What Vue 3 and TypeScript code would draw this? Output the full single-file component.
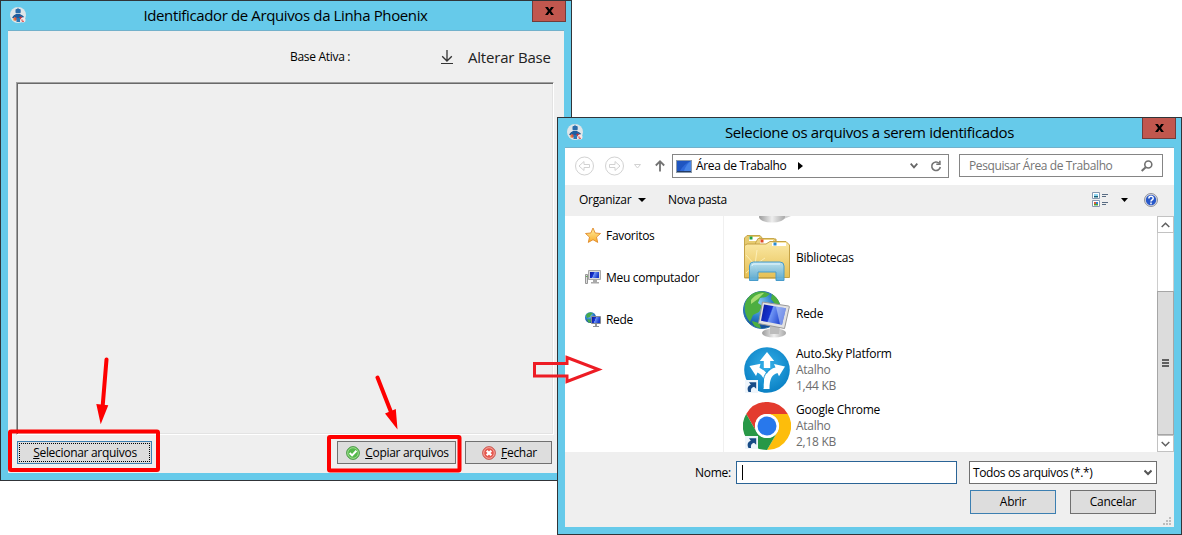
<script setup lang="ts">
import { ref } from 'vue';

interface Entry {
  name: string;
  icon: string;
  kind?: string;
  size?: string;
}

const places: Entry[] = [
  { name: 'Favoritos', icon: 'star' },
  { name: 'Meu computador', icon: 'pc' },
  { name: 'Rede', icon: 'net' },
];

const files: Entry[] = [
  { name: '', icon: 'disk' },
  { name: 'Bibliotecas', icon: 'library' },
  { name: 'Rede', icon: 'network' },
  { name: 'Auto.Sky Platform', icon: 'sky', kind: 'Atalho', size: '1,44 KB' },
  { name: 'Google Chrome', icon: 'chrome', kind: 'Atalho', size: '2,18 KB' },
];

const fileName = ref('');
</script>

<template>
  <div class="desktop">
    <svg class="defs" width="0" height="0">
      <defs>
        <linearGradient id="screen" x1="0" y1="0" x2="1" y2="0.3">
          <stop offset="0" stop-color="#0a1a9c" />
          <stop offset="0.45" stop-color="#1733d0" />
          <stop offset="0.5" stop-color="#6f95f4" />
          <stop offset="1" stop-color="#1a3ccc" />
        </linearGradient>
        <radialGradient id="globe" cx="0.4" cy="0.3" r="0.7">
          <stop offset="0" stop-color="#8fd0f5" />
          <stop offset="0.55" stop-color="#2b7fca" />
          <stop offset="1" stop-color="#114a94" />
        </radialGradient>
        <linearGradient id="metal" x1="0" y1="0" x2="1" y2="0">
          <stop offset="0" stop-color="#9b9b9b" />
          <stop offset="0.5" stop-color="#eeeeee" />
          <stop offset="1" stop-color="#a8a8a8" />
        </linearGradient>
        <linearGradient id="folder" x1="0" y1="0" x2="0" y2="1">
          <stop offset="0" stop-color="#fbe9a6" />
          <stop offset="1" stop-color="#e6c054" />
        </linearGradient>
        <linearGradient id="stand" x1="0" y1="0" x2="0" y2="1">
          <stop offset="0" stop-color="#b9e2f5" />
          <stop offset="1" stop-color="#4ea6d8" />
        </linearGradient>
        <radialGradient id="skyfill" cx="0.5" cy="0.4" r="0.6">
          <stop offset="0" stop-color="#35b0e8" />
          <stop offset="1" stop-color="#0a80c4" />
        </radialGradient>
        <linearGradient id="gold" x1="0" y1="0" x2="0" y2="1">
          <stop offset="0" stop-color="#fff0a0" />
          <stop offset="1" stop-color="#f9ac2a" />
        </linearGradient>
        <symbol id="robot" viewBox="0 0 16 16">
          <circle cx="8" cy="8" r="8" fill="#dfe5e8" />
          <path d="M8 .8v2" stroke="#2467a5" />
          <rect x="5.500" y="2" width="5.200" height="4.200" rx="1" fill="#2a6cab" />
          <path d="M5.500 7h5l1.500 5H4z" fill="#1d5c9e" />
          <path d="M5 8.300 2.700 11M11 8.300l2.500 2" stroke="#1b5793" stroke-width="1.600" />
          <circle cx="5.300" cy="12" r="1.800" fill="#e05643" />
          <circle cx="10.700" cy="11" r="1.600" fill="#bd3440" />
          <path d="M6.500 11h3.500v4H6.500z" fill="#2977b5" />
          <circle cx="13" cy="13" r="2.500" fill="#f7e8e8" />
          <path d="M12 12.300v2h2" fill="none" stroke="#d54a49" />
          <path d="M4 11.500v2" stroke="#f3ae29" />
        </symbol>
        <symbol id="shortcut" viewBox="0 0 13 13">
          <rect width="13" height="13" fill="#eef5fb" />
          <path d="M3.500 12C1.700 8.300 3 5.500 5.800 4.700L4 2.200h7.200v6.600L9 6.800C6.500 7.600 5.500 9 6 12z" fill="#174b86" />
        </symbol>
      </defs>
    </svg>

    <section class="window main-window">
      <header class="titlebar">
        <svg class="app-icon" width="16" height="16"><use href="#robot" /></svg>
        <h1 class="main-title">Identificador de Arquivos da Linha Phoenix</h1>
        <button class="close">
          <svg width="9" height="8" viewBox="0 0 10 9"><path d="M0 0h3.200L5 2.700 6.800 0H10L6.700 4.400 10 9H6.800L5 6.200 3.200 9H0l3.300-4.600z" /></svg>
        </button>
      </header>
      <div class="client">
        <div class="base-row">
          <span class="base-label">Base Ativa :</span>
          <svg class="download" width="12" height="15" viewBox="0 0 12 15" fill="none" stroke="#333">
            <path d="M6 0v11M1.200 6.200 6 11l4.800-4.800" stroke-width="1.300" />
            <path d="M0 13.500h12" />
          </svg>
          <span class="change-base">Alterar Base</span>
        </div>
        <div class="panel"></div>
        <div class="actions">
          <button class="button select"><span class="focus"><span><u>S</u>elecionar arquivos</span></span></button>
          <button class="button copy">
            <svg width="14" height="14" viewBox="0 0 14 14">
              <circle cx="7" cy="7" r="6.400" fill="#54b84a" stroke="#4f9a4c" />
              <circle cx="7" cy="7" r="5.300" fill="none" stroke="#a1dc91" />
              <path d="m3.700 7 2.400 2.400 4.300-4.600" fill="none" stroke="#fff" stroke-width="2" />
            </svg>
            <span><u>C</u>opiar arquivos</span>
          </button>
          <button class="button quit">
            <svg width="14" height="14" viewBox="0 0 14 14">
              <circle cx="7" cy="7" r="6.400" fill="#e5574e" stroke="#c9605a" />
              <circle cx="7" cy="7" r="5.300" fill="none" stroke="#f4aaa0" />
              <path d="m4.700 4.700 4.600 4.600m0-4.600L4.700 9.300" stroke="#fff" stroke-width="2.200" />
            </svg>
            <span><u>F</u>echar</span>
          </button>
        </div>
      </div>
    </section>

    <section class="window dialog">
      <header class="titlebar">
        <svg class="app-icon" width="16" height="16"><use href="#robot" /></svg>
        <h1 class="dialog-title">Selecione os arquivos a serem identificados</h1>
        <button class="close">
          <svg width="9" height="8" viewBox="0 0 10 9"><path d="M0 0h3.200L5 2.700 6.800 0H10L6.700 4.400 10 9H6.800L5 6.200 3.200 9H0l3.300-4.600z" /></svg>
        </button>
      </header>
      <div class="client">
        <nav class="navbar">
          <svg width="101" height="20" viewBox="0 0 101 20" fill="none">
            <g stroke="#d2d2d2">
              <circle cx="10.500" cy="10" r="9" />
              <circle cx="40.500" cy="10" r="9" />
              <path d="m5 10 5-4.500v3h5.500v3H10v3zM46 10l-5-4.500v3h-5.500v3H41v3z" />
              <path d="M60.500 8.500h6l-3 3.500z" />
            </g>
            <path d="M86 15.500V5.500M81.800 9.500 86 5.300l4.200 4.200" stroke="#737373" stroke-width="1.800" />
          </svg>
          <div class="address">
            <svg width="16" height="13" viewBox="0 0 16 13">
              <rect x=".5" y=".5" width="15" height="12" fill="#2f69d9" stroke="#8b9aac" />
              <path d="M1 11V1h14C10 3 6 7 4 11z" fill="#1f55c0" />
              <path d="M15 1v10H8c1-4 4-8 7-10z" fill="#4684e6" />
              <path d="M1 11.500h14" stroke="#263c63" />
            </svg>
            <span class="address-text">Área de Trabalho</span>
            <svg class="crumb" width="5" height="8"><path d="M0 0v8l5-4z" /></svg>
            <svg class="chevron" width="8" height="6" fill="none" stroke="#666" stroke-width="1.800"><path d="m.7.700 3.300 3.600L7.300.700" /></svg>
            <svg width="12" height="12" viewBox="0 0 12 12" fill="none" stroke="#747474" stroke-width="1.600">
              <path d="M9.200 3.300A4.300 4.300 0 1 0 10.300 7" />
              <path d="M9.900.800v3.400H6.300" />
            </svg>
          </div>
          <div class="search">
            <span>Pesquisar Área de Trabalho</span>
            <svg width="12" height="12" viewBox="0 0 12 12" fill="none" stroke="#707070">
              <circle cx="7.300" cy="4.500" r="3.500" stroke-width="1.600" />
              <path d="M4.700 7.200.700 11" stroke-width="2" />
            </svg>
          </div>
        </nav>
        <div class="commands">
          <span class="organize">Organizar</span>
          <svg width="8" height="4"><path d="M0 0h8L4 4z" /></svg>
          <span class="new-folder">Nova pasta</span>
          <svg class="views" width="16" height="16" viewBox="0 0 16 16">
            <path d="M.500.500h7v6h-7zM.500 8.500h7v6h-7z" fill="#fff" stroke="#8799b1" />
            <path d="M2 2h4v2H2z" fill="#91d5f2" />
            <path d="M2 4h4v1.500H2z" fill="#165f73" />
            <path d="M2 10h2v2H2z" fill="#dd5a3a" />
            <path d="M4 10h2v2H4z" fill="#347fcb" />
            <path d="M2 12h4v1.500H2z" fill="#4f9f34" />
            <path d="M10 2.500h6M10 4.500h4M10 10.500h6M10 12.500h4" stroke="#596c83" />
          </svg>
          <svg class="views-arrow" width="7" height="4"><path d="M0 0h7L3.500 4z" /></svg>
          <svg class="help" width="14" height="14" viewBox="0 0 14 14">
            <circle cx="7" cy="7" r="6.500" fill="#d9d9df" stroke="#8f929d" />
            <circle cx="7" cy="7" r="5.200" fill="#2858c9" />
            <path d="M4.900 5.400c0-2.800 4.300-2.700 4.300-.2C9.200 6.900 7 6.700 7 8.500M7 9.600v1.600" fill="none" stroke="#fff" stroke-width="1.500" />
          </svg>
        </div>
        <div class="browser">
          <ul class="places">
            <li v-for="place in places" :key="place.name">
              <svg v-if="place.icon === 'star'" width="16" height="16" viewBox="0 0 16 16">
                <path d="m8 0 2.200 5 5.300.500-4 3.600 1.200 5.300L8 11.700l-4.700 2.700 1.200-5.300-4-3.600L5.800 5z" fill="url(#gold)" stroke="#e08a2a" stroke-width=".9" />
              </svg>
              <svg v-else-if="place.icon === 'pc'" width="16" height="16" viewBox="0 0 16 16">
                <path d="M.500 4.500h2v9h-2z" fill="#ddd" stroke="#969696" />
                <path d="M1 6.500h1.500" stroke="#5fac50" />
                <path d="M3.500.500h12v9h-12z" fill="#ddd" stroke="#a9a9a9" />
                <path d="M5 2h9v6H5z" fill="url(#screen)" />
                <path d="M8 10h4v2h2v1.500H6V12h2z" fill="#aaa" />
              </svg>
              <svg v-else width="16" height="16" viewBox="0 0 16 16">
                <circle cx="5.500" cy="5.500" r="5.500" fill="url(#globe)" />
                <path d="M1 3C3 0 6 0 8 1L6 3 5 5 2 6zM2 7l4 1-1 3-2-1z" fill="#47a94b" />
                <path d="M6.500 4.500h9v7h-9z" fill="#ddd" stroke="#858a93" />
                <path d="M7 5h8v6H7z" fill="url(#screen)" />
                <path d="M10 12h2v2h2v1H8v-1h2z" fill="#8e9298" />
              </svg>
              <span>{{ place.name }}</span>
            </li>
          </ul>
          <ul class="files">
            <li v-for="file in files" :key="file.icon">
              <svg width="48" height="48" viewBox="0 0 48 48">
                <g v-if="file.icon === 'disk'">
                  <path d="M30 36h18v2l-12 5z" fill="#d2d2d2" />
                  <ellipse cx="29" cy="39" rx="13" ry="5.500" fill="url(#metal)" />
                </g>
                <g v-else-if="file.icon === 'library'">
                  <path d="M1.500 44V4L4 1.500h13L20 5h13v39z" fill="#e7cb70" stroke="#c5a748" />
                  <path d="M6 3h10v4H6z" fill="#fff" />
                  <path d="M6.500 2.500h3v3h-3z" fill="#20a445" />
                  <path d="M12.500 9 15 4.500h16L34 8v36H12.500z" fill="#ecd27e" stroke="#c8a84b" />
                  <path d="M17 6h13v4H17z" fill="#fff" />
                  <path d="M17.500 5.500h3v3h-3z" fill="#e14b26" />
                  <path d="M1.500 43.500v-32L4 10h19l4-2.500h16L46.500 11v32.500z" fill="url(#folder)" stroke="#c5a246" />
                  <path d="M29 9h14v3H29z" fill="#fff" />
                  <path d="M30.500 8.500h3v3h-3z" fill="#298bd2" />
                  <path d="m12 31-9-10M12 31l2-15M12 31l10-7M12 31 3 39M12 31l4 12" stroke="#fff7cb" stroke-opacity=".7" />
                  <path d="M6.500 46.500V32q0-4 4-4H37q4 0 4 4v14.500h-8V38H15v8.500z" fill="url(#stand)" fill-opacity=".92" stroke="#489ccb" />
                  <path d="M9 32q0-2 2-2h26" stroke="#e3f7ff" fill="none" />
                </g>
                <g v-else-if="file.icon === 'network'">
                  <circle cx="19" cy="20" r="18.500" fill="url(#globe)" stroke="#2b71a7" />
                  <path d="M2 14C5 4 14 0 22 2l5 2-4 3-6 1-2 5 4 3-3 6-6 3-3 7c-4-5-6-10-5-18zM29 4c5 3 8 8 8 12l-5-2-4-5zM9 31l7 2 2 5c-4 0-8-2-9-7z" fill="#4cae40" />
                  <path d="M8 10c4-5 8-7 13-7l-6 6-7 5z" fill="#a6dc72" />
                  <ellipse cx="31" cy="43" rx="12" ry="4.500" fill="url(#metal)" />
                  <path d="m27 34 10 2-1 8h-9z" fill="#bcbcbc" />
                  <path d="m19.500 12 26 4q1 0 .8 1l-4.800 21.500-26-5z" fill="#e2e2e2" stroke="#999" />
                  <path d="m21 14.500 22 3.700-4 16.600-21-4z" fill="url(#screen)" />
                  <path d="m33 16.600 10 1.600-4 16.600-2-.4z" fill="#c6dbff" opacity=".55" />
                </g>
                <g v-else-if="file.icon === 'sky'">
                  <circle cx="24" cy="24" r="22.800" fill="url(#skyfill)" />
                  <path d="m24 6 7.200 9h-4v7h-6.400v-7h-4z" fill="#fff" />
                  <path d="m6.500 20 11-2.200-1 3.900c5 2.500 7.500 5.500 8.600 9.300L22 37c-1-5.500-3.500-8.500-7.500-10.500L13 30z" fill="#fff" />
                  <path d="M20.500 43c-.5-13 5-20 12-21.500L31 18l11 2.500-6 9.700-1.500-3.200C29 28.500 26.500 33 26.500 43z" fill="#fff" />
                  <path d="M20 42c-.8-9 2-15.500 7-19" fill="none" stroke="#1394d3" />
                  <use href="#shortcut" x="2" y="34" width="13" height="13" />
                </g>
                <g v-else>
                  <circle cx="24" cy="24" r="24" fill="#fff" />
                  <path d="M3.200 12A24 24 0 0 1 44.800 12H24A12 12 0 0 0 13.600 30z" fill="#e33b2e" />
                  <path d="M44.800 12A24 24 0 0 1 24 48L34.400 30A12 12 0 0 0 24 12z" fill="#fdbd0b" />
                  <path d="M24 48A24 24 0 0 1 3.200 12L13.600 30A12 12 0 0 0 34.400 30z" fill="#279847" />
                  <circle cx="24" cy="24" r="12" fill="#fff" />
                  <circle cx="24" cy="24" r="9.500" fill="#2878ec" />
                  <use href="#shortcut" x="2" y="34" width="13" height="13" />
                </g>
              </svg>
              <div class="file-text">
                <span>{{ file.name }}</span>
                <span v-if="file.kind" class="muted">{{ file.kind }}</span>
                <span v-if="file.size" class="muted">{{ file.size }}</span>
              </div>
            </li>
          </ul>
          <div class="scrollbar">
            <div class="scroll-button">
              <svg width="9" height="6" fill="none" stroke="#606060" stroke-width="1.500"><path d="m.7 5 3.800-3.800L8.300 5" /></svg>
            </div>
            <div class="track"></div>
            <div class="thumb">
              <svg width="7" height="8" fill="#606060"><path d="M0 0h7v2H0zM0 3h7v2H0zM0 6h7v2H0z" /></svg>
            </div>
            <div class="scroll-button">
              <svg width="9" height="6" fill="none" stroke="#606060" stroke-width="1.500"><path d="m.7 1 3.800 3.800L8.300 1" /></svg>
            </div>
          </div>
        </div>
        <footer class="footer">
          <div class="name-row">
            <label for="file-name">Nome:</label>
            <div class="name-field">
              <i class="caret"></i>
              <input id="file-name" v-model="fileName" type="text" />
            </div>
            <div class="filter">
              <span>Todos os arquivos (*.*)</span>
              <svg width="8" height="7" fill="none" stroke="#555" stroke-width="2"><path d="m.5 1.500 3.500 3.500 3.500-3.500" /></svg>
            </div>
          </div>
          <div class="dialog-actions">
            <button class="button open">Abrir</button>
            <button class="button cancel">Cancelar</button>
          </div>
          <svg class="grip" width="8" height="8" fill="#bdbdbd">
            <path d="M6 0h2v2H6zM3 3h2v2H3zM6 3h2v2H6zM0 6h2v2H0zM3 6h2v2H3zM6 6h2v2H6z" />
          </svg>
        </footer>
      </div>
    </section>

    <svg class="marks" width="1182" height="535" viewBox="0 0 1182 535" fill="none">
      <g stroke="#fe0000">
        <rect x="10" y="431.500" width="148" height="38.500" rx="1" stroke-width="4" />
        <rect x="329" y="437" width="130.500" height="33.500" rx="1" stroke-width="4" />
        <path d="M106.500 359.500 102.500 408M377.500 377.500 391 412" stroke-width="4" stroke-linecap="round" />
      </g>
      <path d="m96.300 404 12 1.200-7.600 19zM385 413.500l10.800-4.500 1.700 20.500z" fill="#fe0000" />
      <path d="M534.500 363.500H567V357.500l31.500 12-31.500 12v-5.500h-32.500z" stroke="#ed1c24" stroke-width="3" />
    </svg>
  </div>
</template>

<style>
body {
  margin: 0;
  background: #fff;
  overflow: hidden;
}
</style>

<style scoped>
* {
  box-sizing: border-box;
}

.desktop {
  position: relative;
  width: 1182px;
  height: 535px;
  overflow: hidden;
  font-family: 'Open Sans', 'Noto Sans', sans-serif;
  font-size: 12px;
  line-height: 16px;
  letter-spacing: -0.3px;
  color: #000;
  white-space: nowrap;
}

.defs,
.marks {
  position: absolute;
  top: 0;
  left: 0;
  pointer-events: none;
}

svg {
  display: block;
  flex-shrink: 0;
}

ul {
  margin: 0;
  padding: 0;
  list-style: none;
}

button {
  font: inherit;
  letter-spacing: inherit;
  color: inherit;
}

.window {
  position: absolute;
  display: flex;
  flex-direction: column;
  padding: 0 7px 7px;
  border: 1px solid #303438;
  background: #66caea;
}

.main-window {
  top: 0;
  left: 0;
  width: 572px;
  height: 481px;
}

.dialog {
  top: 117px;
  left: 557px;
  width: 625px;
  height: 418px;
}

.titlebar {
  display: flex;
  align-items: flex-start;
  height: 30px;
  border-bottom: 1px solid #72b1cb;

  .app-icon {
    margin: 6px 0 0 2px;
  }

  h1 {
    flex: 1;
    margin: 4px 0 0;
    text-align: center;
    font-size: 15px;
    font-weight: 400;
    line-height: 20px;
  }

  .main-title {
    letter-spacing: -0.37px;
    padding-left: 13px;
  }

  .dialog-title {
    letter-spacing: -0.35px;
    padding-left: 14px;
  }
}

.close {
  display: grid;
  place-items: center;
  width: 34px;
  height: 21px;
  margin-right: -2px;
  padding: 0;
  border: 1px solid #723c3a;
  border-top: 0;
  background: #c1574e;
}

.client {
  display: flex;
  flex: 1;
  flex-direction: column;
  min-height: 0;
  background: #efefef;
}

.base-row {
  display: flex;
  align-items: center;
  height: 51px;
  padding: 1px 13px 0 282px;
}

.download {
  margin-left: auto;
}

.change-base {
  width: 83px;
  margin-left: 15px;
  color: #222;
  font-size: 15px;
  letter-spacing: -0.2px;
}

.panel {
  width: 538px;
  height: 353px;
  margin-left: 8px;
  border: 1px solid #a0a0a0;
  border-right-color: #fff;
  border-bottom-color: #fff;
  box-shadow: inset 1px 1px #696969, inset -1px -1px #e3e3e3;
}

.actions {
  display: flex;
  padding: 6px 0 0 9px;
}

.button {
  display: flex;
  align-items: center;
  justify-content: center;
  gap: 5px;
  height: 23px;
  padding: 0;
  border: 1px solid #707070;
  background: #ddd;
}

.select {
  width: 135px;
  margin-right: 185px;
  padding: 1px;
  border-color: #3c7fb1;
}

.focus {
  display: grid;
  place-items: center;
  width: 100%;
  height: 19px;
  padding-left: 1px;
  border: 1px dotted #000;
}

.copy {
  width: 119px;
  margin-right: 9px;
  padding-left: 2px;
}

.quit {
  width: 87px;
  padding-left: 2px;
}

.dialog .client {
  background: #fff;
}

.navbar {
  display: flex;
  align-items: flex-start;
  height: 37px;
  padding: 6px 11px 0 9px;

  > svg {
    margin: 2px -3px 0 0;
  }
}

.address,
.search {
  display: flex;
  align-items: center;
  border: 1px solid #858585;
  background: #fff;
}

.address {
  width: 277px;
  height: 24px;
  margin-right: 10px;
  padding: 0 6px 0 3px;
}

.address-text {
  width: 91px;
  margin-left: 4px;
  letter-spacing: -0.35px;
}

.crumb {
  margin: 0 auto 0 11px;
}

.chevron {
  margin-right: 12px;
}

.search {
  justify-content: space-between;
  width: 204px;
  height: 23px;
  padding: 0 9px;
  color: #757575;
  letter-spacing: -0.4px;
}

.commands {
  display: flex;
  align-items: center;
  height: 31px;
  padding: 0 16px 1px 14px;
  background: #efefef;
}

.organize {
  width: 59px;
}

.new-folder {
  margin-left: 22px;
  letter-spacing: -0.4px;
}

.views {
  margin-left: auto;
}

.views-arrow {
  margin: 0 16px 0 13px;
}

.browser {
  display: flex;
  height: 236px;
  overflow: hidden;
}

.places {
  width: 159px;
  border-right: 1px solid #f0f0f0;

  li {
    display: flex;
    align-items: center;
    gap: 5px;
    height: 42px;
    padding: 0 0 2px 20px;
  }
}

.files {
  flex: 1;
  height: 278px;
  margin-top: -42px;

  li {
    display: flex;
    align-items: center;
    gap: 5px;
    height: 56px;
    padding-left: 19px;
  }
}

.file-text {
  display: flex;
  flex-direction: column;
  letter-spacing: -0.26px;
}

.muted {
  color: #6d6d6d;
}

.scrollbar {
  display: flex;
  flex-direction: column;
  width: 17px;
}

.scroll-button,
.thumb {
  display: grid;
  place-items: center;
  border: 1px solid #c2c2c2;
}

.scroll-button {
  height: 17px;
}

.track {
  height: 58px;
  border: solid #cdcdcd;
  border-width: 0 1px;
}

.thumb {
  height: 144px;
  border-color: #a6a6a6;
  background: #dcdcdc;
}

.footer {
  position: relative;
  flex: 1;
  padding: 9px 17px 0 130px;
  background: #efefef;
}

.name-row {
  display: flex;
  align-items: center;
}

.name-row label {
  width: 41px;
}

.name-field {
  display: flex;
  align-items: center;
  width: 221px;
  height: 23px;
  margin-right: 12px;
  padding-left: 5px;
  border: 1px solid #2a6496;
  background: #fff;

  input {
    width: 200px;
    padding: 0;
    border: 0;
    outline: 0;
    font: inherit;
  }
}

.caret {
  width: 1px;
  height: 15px;
  background: #000;
}

.filter {
  display: flex;
  flex: 1;
  align-items: center;
  justify-content: space-between;
  height: 23px;
  padding: 0 4px 0 3px;
  border: 1px solid #707070;
  background: #fff;
  letter-spacing: -0.38px;
}

.dialog-actions {
  display: flex;
  justify-content: flex-end;
  gap: 14px;
  margin: 6px 1px 0 0;

  .button {
    width: 86px;
    height: 24px;
  }

  .open {
    border-color: #3c7fb1;
  }
}

.grip {
  position: absolute;
  right: 3px;
  bottom: 2px;
}
</style>
